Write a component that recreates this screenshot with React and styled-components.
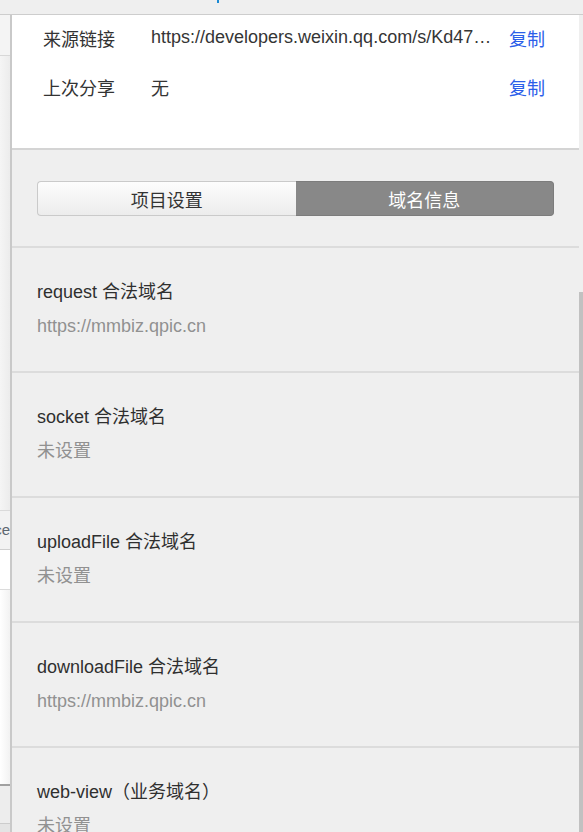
import React from 'react';
import styled, { createGlobalStyle } from 'styled-components';

const GlobalStyle = createGlobalStyle`
  html, body {
    margin: 0;
    padding: 0;
    background: #efefef;
  }
  body {
    font-family: "Liberation Sans", "Noto Sans CJK SC", sans-serif;
  }
`;

const Screen = styled.div`
  width: 583px;
  height: 832px;
  overflow: hidden;
  display: flex;
  flex-direction: column;
  background: #efefef;
`;

const TopStrip = styled.div`
  height: 14px;
  flex: none;
  padding-left: 217px;
  border-bottom: 1px solid #cdcdcd;
  background: #efefef;
`;

const TopMark = styled.span`
  display: block;
  width: 2px;
  height: 3px;
  background: #1a8ad4;
`;

const Body = styled.div`
  flex: 1;
  display: flex;
  min-height: 0;
`;

/* the page that lies behind the panel */
const BackPane = styled.div`
  width: 10px;
  flex: none;
  display: flex;
  flex-direction: column;
  overflow: hidden;
`;

const BackRow = styled.div`
  flex: none;
  height: ${(p) => p.h}px;
  background: ${(p) => p.bg};
  border-bottom: ${(p) => p.line || 0}px solid ${(p) => p.lineColor || '#d6d6d6'};
  font-size: 15px;
  line-height: ${(p) => p.h}px;
  color: #5d6770;
  white-space: nowrap;
  direction: rtl;
  overflow: hidden;
`;

const Panel = styled.div`
  flex: 1;
  min-width: 0;
  display: flex;
  flex-direction: column;
  border-left: 2px solid #c9c9c9;
  background: #efefef;
`;

const InfoCard = styled.div`
  background: #fff;
  padding: 0 34px 35px 31px;
  border-bottom: 2px solid #d4d4d4;
`;

const InfoRow = styled.div`
  box-sizing: border-box;
  height: 49px;
  padding-bottom: 4px;
  display: flex;
  align-items: center;
  font-size: 18px;
  color: #333;
`;

const InfoLabel = styled.span`
  width: 108px;
  flex: none;
`;

const InfoValue = styled.span`
  flex: 1;
  min-width: 0;
  padding-right: 12px;
  white-space: nowrap;
  overflow: hidden;
  text-overflow: ellipsis;
  color: #353535;
`;

const CopyLink = styled.a`
  flex: none;
  color: #2b5ee9;
  cursor: pointer;
  text-decoration: none;
`;

const TabBlock = styled.div`
  padding: 31px 25px 30px 25px;
  border-bottom: 2px solid #dcdcdc;
`;

const Tabs = styled.div`
  display: flex;
  height: 35px;
`;

const Tab = styled.div`
  flex: 1;
  display: flex;
  align-items: center;
  justify-content: center;
  font-size: 18px;
  box-sizing: border-box;
  border: 1px solid ${(p) => (p.active ? '#7c7c7c' : '#cacaca')};
  color: ${(p) => (p.active ? '#fff' : '#333')};
  background: ${(p) => (p.active ? '#888' : 'linear-gradient(#fdfdfd, #ececec)')};
  border-radius: ${(p) => (p.side === 'left' ? '4px 0 0 4px' : '0 4px 4px 0')};
  ${(p) => (p.side === 'left' ? 'border-right: none;' : 'border-left: none;')}
`;

const DomainSection = styled.div`
  flex: none;
  padding: 32px 25px 33px 25px;
  border-bottom: 2px solid #dcdcdc;
  display: flex;
  flex-direction: column;
  gap: 10px;
`;

const DomainTitle = styled.div`
  font-size: 18px;
  line-height: 24px;
  color: #2f2f2f;
`;

const DomainValue = styled.div`
  font-size: 18px;
  line-height: 24px;
  color: #919191;
`;

const Rail = styled.div`
  width: 4px;
  flex: none;
  display: flex;
  flex-direction: column;
  padding-top: 277px;
`;

const Thumb = styled.div`
  flex: 1;
  background: #c1c1c1;
`;

const infoRows = [
  { label: '来源链接', value: 'https://developers.weixin.qq.com/s/Kd47kYmP7bZA' },
  { label: '上次分享', value: '无' },
];

const domains = [
  { title: 'request 合法域名', value: 'https://mmbiz.qpic.cn' },
  { title: 'socket 合法域名', value: '未设置' },
  { title: 'uploadFile 合法域名', value: '未设置' },
  { title: 'downloadFile 合法域名', value: 'https://mmbiz.qpic.cn' },
  { title: 'web-view（业务域名）', value: '未设置' },
];

export default function App() {
  return (
    <Screen>
      <GlobalStyle />
      <TopStrip>
        <TopMark />
      </TopStrip>
      <Body>
        <BackPane>
          <BackRow h={40} bg="#f4f4f4" line={1} lineColor="#d8d8d8" />
          <BackRow h={454} bg="linear-gradient(90deg, #f5f5f5, #ececec)" line={1} lineColor="#dadada" />
          <BackRow h={38} bg="#f2f2f2" line={1} lineColor="#cfcfcf">ace</BackRow>
          <BackRow h={39} bg="#fff" line={1} lineColor="#dcdcdc" />
          <BackRow h={194} bg="linear-gradient(90deg, #ffffff, #f2f2f2)" line={2} lineColor="#a0a0a0" />
          <BackRow h={37} bg="#ededed" line={1} lineColor="#cccccc" />
          <BackRow h={20} bg="#e4e4e4" />
        </BackPane>
        <Panel>
          <InfoCard>
            {infoRows.map((row) => (
              <InfoRow key={row.label}>
                <InfoLabel>{row.label}</InfoLabel>
                <InfoValue>{row.value}</InfoValue>
                <CopyLink>复制</CopyLink>
              </InfoRow>
            ))}
          </InfoCard>
          <TabBlock>
            <Tabs>
              <Tab side="left">项目设置</Tab>
              <Tab side="right" active>域名信息</Tab>
            </Tabs>
          </TabBlock>
          {domains.map((d) => (
            <DomainSection key={d.title}>
              <DomainTitle>{d.title}</DomainTitle>
              <DomainValue>{d.value}</DomainValue>
            </DomainSection>
          ))}
        </Panel>
        <Rail>
          <Thumb />
        </Rail>
      </Body>
    </Screen>
  );
}
